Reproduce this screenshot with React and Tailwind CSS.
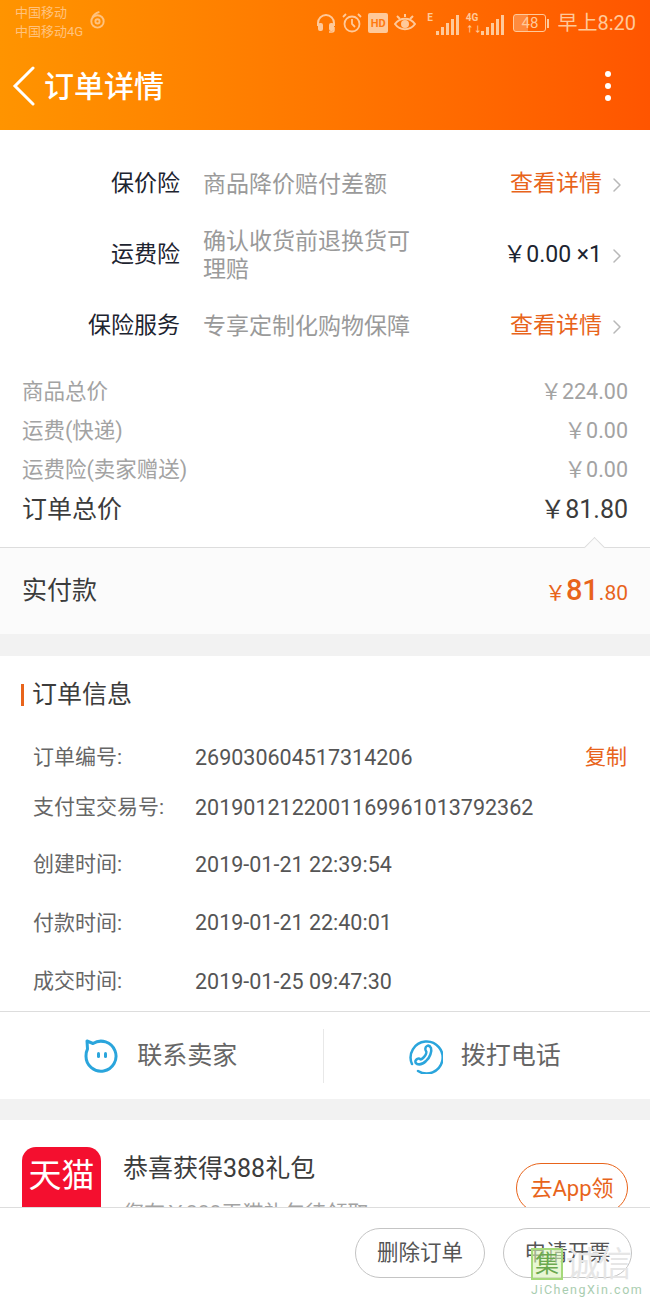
import { ChevronRight } from "lucide-react";

const font = { };

function Bars({ label, tiny }) {
  return (
    <div className="relative flex h-[24px] items-end gap-[2px]">
      <span className="mb-[12px] mr-[1px] text-[10px] font-bold leading-none text-[#ffc99a]">{label}</span>
      <span className="h-[4px] w-[3px] bg-[#ffc99a]" />
      <span className="h-[8px] w-[3px] bg-[#ffc99a]" />
      <span className="h-[12px] w-[3px] bg-[#ffc99a]" />
      <span className="h-[16px] w-[3px] bg-[#ffc99a]" />
      <span className="h-[20px] w-[3px] bg-[#ffc99a]" />
      {tiny && <span className="absolute bottom-[1px] left-0 text-[8px] font-bold leading-none text-[#ffc99a]">↑↓</span>}
    </div>
  );
}

function StatusBar() {
  return (
    <div className="flex h-[42px] items-start justify-between pl-[15px] pr-[14px] pt-[3px]">
      <div className="flex items-center gap-[5px]">
        <div className="text-[13px] leading-[19px] text-[#ffc27e]">
          <div>中国移动</div>
          <div>中国移动4G</div>
        </div>
        <svg viewBox="0 0 20 20" className="mb-[6px] h-[19px] w-[19px]" fill="none" stroke="#ffc27e" strokeWidth="2">
          <circle cx="10" cy="12" r="6.5" />
          <circle cx="10" cy="12" r="2.2" />
          <path d="M12 2C9 3 6 4.500 4.500 8" />
        </svg>
      </div>
      <div className="mt-[8px] flex items-center text-[#ffc99a]">
        <svg viewBox="0 0 20 20" className="h-[20px] w-[20px]" fill="none" stroke="currentColor" strokeWidth="2">
          <path d="M2 13V10a8 8 0 0 1 16 0v3" />
          <rect x="3" y="11" width="3" height="6" rx="1" fill="currentColor" />
          <rect x="14" y="11" width="3" height="6" rx="1" fill="currentColor" />
          <path d="M18 14v3a2 2 0 0 1-2 2h-3" strokeWidth="1.500" />
        </svg>
        <svg viewBox="0 0 20 20" className="ml-[6px] h-[20px] w-[20px]" fill="none" stroke="currentColor" strokeWidth="1.800">
          <circle cx="10" cy="11" r="7.500" />
          <path d="M10 6v5l3 3M1 4l3-3M19 4l-3-3" />
        </svg>
        <span className="ml-[6px] flex h-[20px] w-[20px] items-center justify-center rounded-[2px] bg-[#ffc99a] text-[11px] font-bold leading-none text-[#ff7a10]">HD</span>
        <svg viewBox="0 0 22 20" className="ml-[6px] h-[20px] w-[22px]" fill="none" stroke="currentColor" strokeWidth="2">
          <path d="M1 11c5-7 15-7 20 0-5 7-15 7-20 0z" />
          <circle cx="11" cy="11" r="3" fill="currentColor" />
          <path d="M3 3l3 3M19 3l-3 3M11 1v3" />
        </svg>
        <div className="ml-[11px]"><Bars label="E" /></div>
        <div className="ml-[7px]"><Bars label="4G" tiny /></div>
        <div className="ml-[9px] flex items-center gap-[1px]">
          <div className="relative flex h-[18px] w-[33px] items-center justify-center rounded-[3px] border border-[#ffc99a] text-[15px] leading-none">
            <span className="absolute inset-y-0 left-0 w-[14px] bg-[#ffc99a]/40" />
            <span className="relative">48</span>
          </div>
          <span className="h-[9px] w-[2px] bg-[#ffc99a]" />
        </div>
        <span className="ml-[8px] text-[20px] leading-none">早上8:20</span>
      </div>
    </div>
  );
}

function InsuranceRow({ label, desc, right, orange }) {
  return (
    <div className="flex h-[71px] items-center">
      <span className="w-[180px] shrink-0 text-right text-[23px] text-[#1d2430]">{label}</span>
      <span className="ml-[23px] w-[225px] shrink-0 text-[23px] leading-[28px] text-[#9a9a9a]">{desc}</span>
      <div className="flex flex-1 items-center justify-end pr-[21px]">
        <span className={orange ? "text-[23px] text-[#e8641b]" : "text-[23px] text-[#1d2430]"}>{right}</span>
        <ChevronRight className="ml-[3px] h-[24px] w-[24px] text-[#b8b8b8]" strokeWidth={1.5} />
      </div>
    </div>
  );
}

function PriceLine({ label, value }) {
  return (
    <div className="flex h-[39px] items-center justify-between text-[21.5px] text-[#a3a3a3]">
      <span>{label}</span>
      <span>{value}</span>
    </div>
  );
}

function InfoRow({ label, value, h, copy }) {
  return (
    <div className={`flex items-center ${h}`}>
      <span className="w-[162px] shrink-0 text-[21px] text-[#666666]">{label}</span>
      <span className="text-[21.5px] text-[#555555]">{value}</span>
      {copy && <span className="ml-auto text-[21px] text-[#e8641b]">复制</span>}
    </div>
  );
}

export default function App() {
  return (
    <div
      className="relative h-[1300px] w-[650px] overflow-hidden bg-white"
      style={{ fontFamily: 'Roboto, "Noto Sans CJK SC", sans-serif' }}
    >
      {/* top orange header */}
      <div className="h-[130px] bg-gradient-to-r from-[#ff9400] to-[#ff5500]">
        <StatusBar />
        <div className="flex h-[88px] items-center justify-between pb-[0px] pl-[12px] pr-[39px]">
          <div className="flex items-center">
            <svg viewBox="0 0 24 40" className="h-[40px] w-[24px]" fill="none" stroke="#fff" strokeWidth="3" strokeLinecap="round">
              <path d="M21 2L3 20l18 18" />
            </svg>
            <span className="ml-[8px] text-[30px] font-medium text-white">订单详情</span>
          </div>
          <div className="flex flex-col gap-[6px]">
            <span className="h-[6px] w-[6px] rounded-full bg-white" />
            <span className="h-[6px] w-[6px] rounded-full bg-white" />
            <span className="h-[6px] w-[6px] rounded-full bg-white" />
          </div>
        </div>
      </div>

      {/* insurance rows */}
      <div className="pt-[19px]">
        <InsuranceRow label="保价险" desc="商品降价赔付差额" right="查看详情" orange />
        <InsuranceRow label="运费险" desc="确认收货前退换货可理赔" right="￥0.00 ×1" />
        <InsuranceRow label="保险服务" desc="专享定制化购物保障" right="查看详情" orange />
      </div>

      {/* price summary */}
      <div className="px-[22px] pt-[11px]">
        <PriceLine label="商品总价" value="￥224.00" />
        <PriceLine label="运费(快递)" value="￥0.00" />
        <PriceLine label="运费险(卖家赠送)" value="￥0.00" />
        <div className="flex h-[40px] items-center justify-between text-[25px] text-[#3c3c3c]">
          <span>订单总价</span>
          <span>￥81.80</span>
        </div>
      </div>

      <div className="relative mt-[17px] flex h-[87px] items-center justify-between border-t border-[#dddddd] bg-[#fbfbfb] px-[22px]">
        <span className="absolute right-[48px] top-[-8px] h-[15px] w-[15px] rotate-45 border-l border-t border-[#dddddd] bg-[#fbfbfb]" />
        <span className="text-[25px] text-[#3c3c3c]">实付款</span>
        <span className="text-[#e8641b]">
          <span className="text-[21px]">￥</span>
          <span className="text-[29px] font-medium">81</span>
          <span className="text-[21px]">.80</span>
        </span>
      </div>
      <div className="h-[22px] bg-[#f2f2f2]" />

      {/* order info */}
      <div className="pt-[23px]">
        <div className="flex h-[32px] items-center">
          <span className="ml-[21px] h-[22px] w-[3px] bg-[#e8641b]" />
          <span className="ml-[8px] text-[25px] text-[#3c3c3c]">订单信息</span>
        </div>
        <div className="pl-[33px] pr-[23px] pt-[25px]">
          <InfoRow label="订单编号:" value="269030604517314206" h="h-[44px]" copy />
          <InfoRow label="支付宝交易号:" value="2019012122001169961013792362" h="h-[56px]" />
          <InfoRow label="创建时间:" value="2019-01-21 22:39:54" h="h-[58px]" />
          <InfoRow label="付款时间:" value="2019-01-21 22:40:01" h="h-[59px]" />
          <InfoRow label="成交时间:" value="2019-01-25 09:47:30" h="h-[58px]" />
        </div>
      </div>

      {/* contact */}
      <div className="mt-[0px] flex h-[88px] items-center border-t border-[#dddddd]">
        <div className="flex h-[54px] flex-1 items-center justify-center gap-[18px] border-r border-[#e8e8e8] pr-[2px]">
          <svg viewBox="0 0 36 36" className="h-[36px] w-[36px]" fill="none" stroke="#2aa5dc" strokeWidth="3">
            <path d="M4 3l6 2.500A15 15 0 1 1 3 18c0-3 .5-5 1.500-7z" strokeLinejoin="round" />
            <rect x="14" y="14" width="3" height="6" rx="1.500" fill="#2aa5dc" stroke="none" />
            <rect x="21" y="14" width="3" height="6" rx="1.500" fill="#2aa5dc" stroke="none" />
          </svg>
          <span className="text-[25px] text-[#666666]">联系卖家</span>
        </div>
        <div className="flex h-[54px] flex-1 items-center justify-center gap-[18px] pr-[6px]">
          <svg viewBox="0 0 36 36" className="h-[36px] w-[36px]" fill="none" stroke="#2aa5dc" strokeWidth="2.500">
            <path d="M11 33A16 16 0 1 0 5 26" strokeLinecap="round" />
            <path d="M20 8c2-1 3 0 4 2 1 3-1 10-5 13-3 3-6 4-9 3-2-1-2-3-1-4s3-2 4-1c1 1 2 0 4-2s3-5 2-6-1-4 1-5z" />
          </svg>
          <span className="text-[25px] text-[#666666]">拨打电话</span>
        </div>
      </div>
      <div className="h-[21px] bg-[#f2f2f2]" />

      {/* tmall gift */}
      <div className="flex px-[22px] pt-[27px]">
        <div className="relative h-[79px] w-[79px] shrink-0 overflow-hidden rounded-[14px] bg-[#f40f2f]">
          <div className="pt-[9px] text-center text-[33px] leading-[40px] text-white">天猫</div>
          <span className="absolute bottom-[-14px] left-[0px] h-[28px] w-[22px] rounded-t-full bg-black" />
          <span className="absolute bottom-[-14px] right-[0px] h-[28px] w-[22px] rounded-t-full bg-black" />
        </div>
        <div className="ml-[22px] flex-1">
          <div className="text-[25px] leading-[44px] text-[#3c3c3c]">恭喜获得388礼包</div>
          <div className="mt-[8px] text-[21px] leading-[28px] text-[#a3a3a3]">您有￥388天猫礼包待领取</div>
        </div>
        <div className="mt-[16px] flex h-[50px] w-[112px] items-center justify-center rounded-full border border-[#e8641b] text-[22px] text-[#e8641b]">去App领</div>
      </div>

      {/* bottom action bar, sits over the scrolled content */}
      <div className="absolute inset-x-0 bottom-0 flex h-[93px] justify-end gap-[18px] border-t border-[#dddddd] bg-white pr-[18px] pt-[20px]">
        <div className="flex h-[50px] w-[130px] items-center justify-center rounded-full border border-[#c4c4c4] text-[21.5px] text-[#555555]">删除订单</div>
        <div className="flex h-[50px] w-[129px] items-center justify-center rounded-full border border-[#c4c4c4] text-[21.5px] text-[#555555]">申请开票</div>
      </div>

      {/* watermark */}
      <div className="absolute bottom-[3px] right-[1px] w-[118px]">
        <div className="flex items-center">
          <span className="flex h-[32px] w-[32px] items-center justify-center border-2 border-[#a5d97a] bg-[#d9f2b8]/60 text-[24px] leading-none text-[#6aa84f]">集</span>
          <span className="ml-[3px] text-[34px] leading-none tracking-[-2px] text-[#e6e6e6]">诚信</span>
        </div>
        <div className="mt-[1px] text-[12.500px] leading-[15px] tracking-[1.500px] text-[#a9cdb0]">JiChengXin.com</div>
      </div>
    </div>
  );
}
